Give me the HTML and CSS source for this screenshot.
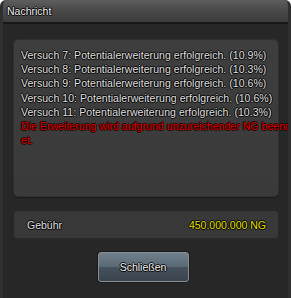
FILE: index.html
```html
<!DOCTYPE html>
<html lang="de">
<head>
<meta charset="utf-8">
<title>Nachricht</title>
<link rel="stylesheet" href="styles.css">
</head>
<body>
<div class="window">
  <div class="titlebar">Nachricht</div>
  <div class="content">
    <div class="msg-panel">
      <div class="line">Versuch 7: Potentialerweiterung erfolgreich. (10.9%)</div>
      <div class="line">Versuch 8: Potentialerweiterung erfolgreich. (10.3%)</div>
      <div class="line">Versuch 9: Potentialerweiterung erfolgreich. (10.6%)</div>
      <div class="line">Versuch 10: Potentialerweiterung erfolgreich. (10.6%)</div>
      <div class="line">Versuch 11: Potentialerweiterung erfolgreich. (10.3%)</div>
      <div class="line error">Die Erweiterung wird aufgrund unzureichender NG beend<br>et.</div>
    </div>
    <div class="fee-panel">
      <span class="fee-label">Gebühr</span>
      <span class="fee-value">450.000.000 NG</span>
    </div>
    <div class="actions">
      <button class="btn">Schließen</button>
    </div>
  </div>
</div>
</body>
</html>
```
FILE: styles.css
```css
html, body {
  margin: 0;
  padding: 0;
  background: #ffffff;
}
body {
  font-family: "Liberation Sans", Arial, sans-serif;
  font-size: 10.5px;
}
.window {
  width: 291px;
  height: 298px;
  box-sizing: border-box;
  background: #272727;
  border-radius: 6px 6px 0 0;
  overflow: hidden;
  display: flex;
  flex-direction: column;
  border-left: 3px solid #2f2f2f;
  border-right: 3px solid #2f2f2f;
}
.titlebar {
  height: 22px;
  line-height: 23px;
  margin: 0 -3px;
  padding-left: 7px;
  background: linear-gradient(#5e5e5e 0%, #4a4a4a 45%, #3c3c3c 100%);
  border-bottom: 2px solid #181818;
  color: #f4f4f4;
  font-size: 10.5px;
  text-shadow: 1px 0 #000, -1px 0 #000, 0 1px #000, 0 -1px #000;
  flex: none;
}
.content {
  display: flex;
  flex-direction: column;
  padding: 16px 10px 0 11px;
}
.msg-panel {
  height: 156px;
  box-sizing: border-box;
  background: linear-gradient(#3e3e3e, #3a3a3a);
  border-radius: 4px;
  box-shadow: 0 0 0 1px #303030, 0 1px 1px 1px #1c1c1c;
  padding: 8px 0 0 7px;
}
.line {
  line-height: 14.2px;
  color: #e2e2e2;
  white-space: nowrap;
  letter-spacing: 0.05px;
  text-shadow: 1px 0 #000, -1px 0 #000, 0 1px #000, 0 -1px #000;
}
.line.error {
  color: #e00000;
  text-shadow: 1px 0 #1a0000, -1px 0 #1a0000, 0 1px #1a0000, 0 -1px #1a0000;
}
.fee-panel {
  margin-top: 15px;
  height: 27px;
  background: #383838;
  border-radius: 3px;
  display: flex;
  align-items: center;
  justify-content: space-between;
  padding: 0 12px 0 13px;
}
.fee-label {
  color: #e2e2e2;
  text-shadow: 1px 0 #000, -1px 0 #000, 0 1px #000, 0 -1px #000;
}
.fee-value {
  color: #e8e000;
  text-shadow: 1px 0 #000, -1px 0 #000, 0 1px #000, 0 -1px #000;
}
.actions {
  display: flex;
  justify-content: center;
  margin-top: 14px;
  padding-right: 6px;
}
.btn {
  width: 91px;
  height: 30px;
  box-sizing: border-box;
  border: 1px solid #8a8f94;
  border-radius: 3px;
  background: linear-gradient(#6f7f8c 0%, #5b6a77 48%, #45515c 52%, #3a444d 100%);
  color: #f6f6f6;
  font-family: "Liberation Sans", Arial, sans-serif;
  font-size: 10.5px;
  padding: 0;
  text-shadow: 1px 0 #000, -1px 0 #000, 0 1px #000, 0 -1px #000;
  box-shadow: 0 0 0 1px #1a1a1a;
}
```
